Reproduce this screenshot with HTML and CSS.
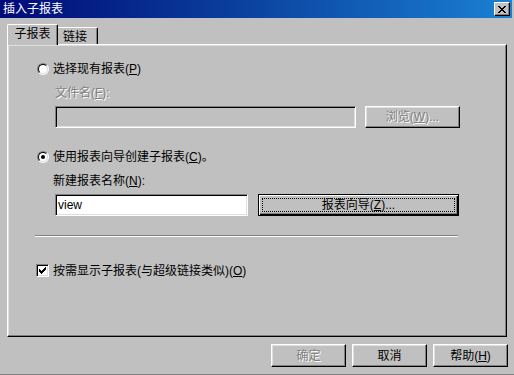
FILE: index.html
```html
<!DOCTYPE html>
<html lang="zh-CN">
<head>
<meta charset="utf-8">
<title>插入子报表</title>
<link rel="stylesheet" href="styles.css">
</head>
<body>
<div class="dialog">
  <div class="titlebar">
    <span class="title">插入子报表</span>
    <span class="close">
      <svg width="8" height="7" viewBox="0 0 8 7" shape-rendering="crispEdges"><path d="M0 0h2v1h1v1h2V1h1V0h2v1H7v1H6v1H5v1h1v1h1v1h1v1H6V6H5V5H3v1H2v1H0V6h1V5h1V4h1V3H2V2H1V1H0z" fill="#000"/></svg>
    </span>
  </div>
  <div class="main">
    <div class="tabs">
      <div class="tab active">子报表</div>
      <div class="tab">链接</div>
    </div>
    <div class="panel">
      <div class="opt">
        <span class="radio"><span class="radio-in"></span></span>
        <span>选择现有报表(<u>P</u>)</span>
      </div>
      <div class="lab lab-file dis">文件名(<u>F</u>):</div>
      <div class="field-row">
        <div class="input input-file off"></div>
        <div class="btn btn-browse dis">浏览(<u>W</u>)...</div>
      </div>
      <div class="opt opt-2">
        <span class="radio on"><span class="radio-in"></span></span>
        <span>使用报表向导创建子报表(<u>C</u>)。</span>
      </div>
      <div class="lab lab-name">新建报表名称(<u>N</u>):</div>
      <div class="field-row">
        <div class="input input-name">view</div>
        <div class="btn btn-wizard default"><span class="focus">报表向导(<u>Z</u>)...</span></div>
      </div>
      <div class="sep"></div>
      <div class="check-row">
        <span class="check">
          <svg width="7" height="7" viewBox="0 0 7 7" shape-rendering="crispEdges"><path d="M6 0h1v3H6v1H5v1H4v1H3v1H2V6H1V5H0V2h1v1h1v1h1V3h1V2h1V1h1z" fill="#000"/></svg>
        </span>
        <span>按需显示子报表(与超级链接类似)(<u>O</u>)</span>
      </div>
    </div>
    <div class="buttons">
      <div class="btn btn-dlg dis">确定</div>
      <div class="btn btn-dlg">取消</div>
      <div class="btn btn-dlg">帮助(<u>H</u>)</div>
    </div>
  </div>
</div>
</body>
</html>
```

FILE: styles.css
```css
* { box-sizing: border-box; }
html, body { margin: 0; padding: 0; }
body {
  width: 514px;
  height: 375px;
  overflow: hidden;
  background: #c0c0c0;
  color: #000;
  font-family: "Liberation Sans", "Noto Sans CJK SC", sans-serif;
  font-size: 12px;
  line-height: 14px;
}
u { text-decoration: underline; text-underline-offset: 1px; }

.dialog {
  width: 514px;
  height: 375px;
  display: flex;
  flex-direction: column;
  padding-right: 2px;
  border-bottom: 1px solid #808080;
}

.titlebar {
  height: 18px;
  flex: none;
  display: flex;
  align-items: center;
  justify-content: space-between;
  padding: 0 2px 0 3px;
  background: linear-gradient(to right, #000a78 0%, #0a3e9c 45%, #1a80d2 100%);
  color: #fff;
}
.title { font-size: 12px; line-height: 14px; }
.close {
  width: 16px;
  height: 14px;
  background: #c0c0c0;
  border: 1px solid;
  border-color: #fff #000 #000 #fff;
  box-shadow: inset -1px -1px #808080;
  display: flex;
  align-items: center;
  justify-content: center;
}

.main {
  flex: 1;
  display: flex;
  flex-direction: column;
  padding: 6px 5px 0 7px;
}

.tabs {
  display: flex;
  align-items: flex-end;
  height: 20px;
  flex: none;
}
.tab {
  width: 40px;
  height: 17px;
  border-top: 1px solid #fff;
  border-right: 1px solid #000;
  border-top-right-radius: 2px;
  box-shadow: inset -1px 0 #808080;
  display: flex;
  align-items: center;
  padding: 2px 0 0 5px;
}
.tab.active {
  width: 51px;
  height: 21px;
  margin-bottom: -1px;
  border-left: 1px solid #fff;
  border-top-left-radius: 2px;
  background: #c0c0c0;
  position: relative;
  z-index: 1;
  justify-content: center;
  padding: 0 0 2px 0;
}

.panel {
  width: 500px;
  height: 293px;
  flex: none;
  border: 1px solid;
  border-color: #fff #000 #000 #fff;
  box-shadow: inset -1px -1px #808080, inset 1px 1px #dfdfdf;
  padding: 17px 0 0 29px;
  display: flex;
  flex-direction: column;
  align-items: flex-start;
}

.opt {
  display: flex;
  align-items: center;
  height: 14px;
  gap: 4px;
}
.opt-2 { margin-top: 22px; }

.radio {
  width: 12px;
  height: 12px;
  flex: none;
  border-radius: 50%;
  border: 1px solid;
  border-color: #808080 #fff #fff #808080;
}
.radio-in {
  width: 10px;
  height: 10px;
  border-radius: 50%;
  border: 1px solid;
  border-color: #000 #dfdfdf #dfdfdf #000;
  background: #fff;
  display: flex;
  align-items: center;
  justify-content: center;
}
.radio.on .radio-in::after {
  content: "";
  width: 4px;
  height: 4px;
  border-radius: 50%;
  background: #000;
}

.lab { height: 14px; margin-top: 10px; }
.lab-file { margin-left: 18px; }
.lab-name { margin-left: 16px; }

.dis {
  color: #808080;
  text-shadow: 1px 1px 0 #fff;
}

.field-row {
  display: flex;
  margin: 6px 0 0 18px;
}

.input {
  height: 22px;
  background: #fff;
  border: 1px solid;
  border-color: #808080 #fff #fff #808080;
  box-shadow: inset 1px 1px #000, inset -1px -1px #dfdfdf;
  display: flex;
  align-items: center;
  padding: 0 0 0 2px;
}
.input.off { background: #c0c0c0; }
.input-file { width: 301px; }
.input-name { width: 193px; }

.btn {
  height: 22px;
  background: #c0c0c0;
  border: 1px solid;
  border-color: #fff #000 #000 #fff;
  box-shadow: inset -1px -1px #808080, inset 1px 1px #dfdfdf;
  display: flex;
  align-items: center;
  justify-content: center;
}
.btn-browse { width: 95px; margin-left: 9px; }
.btn-wizard { width: 201px; margin-left: 10px; }
.btn.default {
  border-color: #000;
  box-shadow: inset 1px 1px #fff, inset -1px -1px #000, inset -2px -2px #808080;
  align-items: stretch;
}
.focus {
  flex: 1;
  margin: 3px;
  border: 1px dotted #000;
  display: flex;
  align-items: center;
  justify-content: center;
}

.sep {
  width: 423px;
  height: 2px;
  margin: 19px 0 0 -2px;
  border-top: 1px solid #808080;
  border-bottom: 1px solid #fff;
}

.check-row {
  display: flex;
  align-items: center;
  gap: 4px;
  height: 13px;
  margin: 27px 0 0 -1px;
}
.check {
  width: 13px;
  height: 13px;
  flex: none;
  background: #fff;
  border: 1px solid;
  border-color: #808080 #fff #fff #808080;
  box-shadow: inset 1px 1px #000, inset -1px -1px #dfdfdf;
  display: flex;
  align-items: center;
  justify-content: center;
}

.buttons {
  display: flex;
  justify-content: flex-end;
  gap: 6px;
  margin: 7px -1px 0 0;
}
.btn-dlg { width: 75px; height: 23px; }
```
